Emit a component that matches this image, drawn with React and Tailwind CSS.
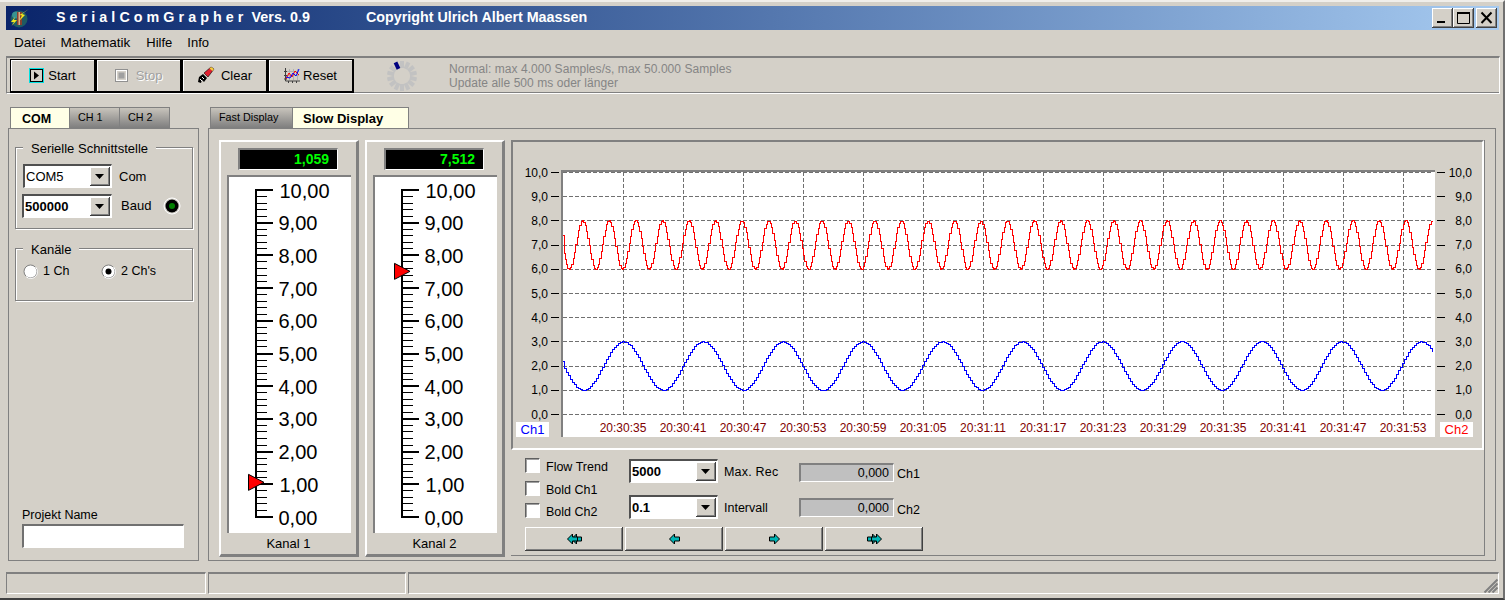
import React from 'react';

const FONT = "font-['Liberation_Sans',Arial,sans-serif]";
const raised = 'shadow-[inset_1px_1px_0_#fff,inset_-1px_-1px_0_#808080]';

function Logo() {
  return (
    <svg width="20" height="20" viewBox="0 0 20 20" className="shrink-0">
      <ellipse cx="9" cy="11" rx="8.5" ry="8.5" fill="#1f5a62" />
      <ellipse cx="6" cy="7" rx="4" ry="3.5" fill="#3a9490" />
      <rect x="7" y="4" width="5" height="13" fill="#8a3f2c" />
      <rect x="8.5" y="4" width="1.5" height="13" fill="#d9b08c" />
      <path d="M19 1 L12 6 L15 7 L9 13 L12 7.5 L9.5 7 Z" fill="#f4e81c" />
      <path d="M5 9 L1 14 L4 14 L1.5 18 L7 12 L4 12 Z" fill="#f4e81c" />
    </svg>
  );
}

function WinBtn({ children, className }) {
  return (
    <div className={`w-[21px] h-[20px] bg-[#d4d0c8] flex items-center justify-center border-r border-b border-[#404040] ${raised} ${className || ''}`}>
      <svg width="19" height="18" viewBox="0 0 19 18">{children}</svg>
    </div>
  );
}

function ToolBtn({ icon, label, disabled, gap }) {
  return (
    <div className={`w-[86px] h-[34px] flex items-center justify-center border-t border-l border-r-2 border-b-2 border-black bg-[#d4d0c8] shadow-[inset_1px_1px_0_#fff] ${gap}`}>
      {icon}
      <span className={`pt-[1px] ${disabled ? 'text-[#a0a0a0] [text-shadow:1px_1px_0_#fff]' : ''}`}>{label}</span>
    </div>
  );
}

function Spinner() {
  const segs = [];
  for (let i = 0; i < 14; i++) {
    segs.push(
      <line key={i} x1="16" y1="8" x2="16" y2="1" stroke={i === 13 ? '#000080' : '#c2c2c2'} strokeWidth="4" transform={`rotate(${(i * 360) / 14} 16 16)`} />
    );
  }
  return <svg width="32" height="32" viewBox="0 0 32 32" className="shrink-0">{segs}</svg>;
}

function Combo({ text, bold, w = 'w-[89px]' }) {
  return (
    <div className={`${w} h-[24px] shrink-0 bg-white flex items-center justify-between border-t-2 border-l-2 border-[#505050] border-r border-b border-r-white border-b-white pr-[1px]`}>
      <span className={`pl-[1px] text-[13px] ${bold ? 'font-bold' : ''}`}>{text}</span>
      <div className={`w-[20px] h-[19px] bg-[#d4d0c8] flex items-center justify-center border-r border-b border-[#404040] ${raised}`}>
        <svg width="9" height="5" viewBox="0 0 9 5"><path d="M0 0H9L4.5 5Z" fill="#000" /></svg>
      </div>
    </div>
  );
}

function Group({ title, className, children }) {
  return (
    <div className={`relative w-[178px] border border-[#808080] shadow-[1px_1px_0_#fff,inset_1px_1px_0_#fff] ${className}`}>
      <span className="absolute -top-[9px] left-[7px] bg-[#d4d0c8] px-[8px] text-[13px] whitespace-nowrap">{title}</span>
      {children}
    </div>
  );
}

function Radio({ on }) {
  return (
    <svg width="15" height="15" viewBox="0 0 15 15" className="shrink-0">
      <circle cx="7.5" cy="7.5" r="6.5" fill="#fff" stroke="#808080" />
      <path d="M3 12.5 A6.5 6.5 0 0 0 12.5 3" fill="none" stroke="#fff" />
      {on && <circle cx="7.5" cy="7.5" r="3" fill="#000" />}
    </svg>
  );
}

function Gauge({ display, value, name }) {
  const ticks = [];
  for (let i = 0; i <= 50; i++) {
    const y = 517 - i * 6.54;
    const major = i % 5 === 0;
    ticks.push(<line key={i} x1="256" x2={major ? 273 : 267} y1={y} y2={y} stroke="#000" strokeWidth={major ? 2 : 1} shapeRendering="crispEdges" />);
  }
  const labels = [];
  for (let v = 0; v <= 10; v++) {
    labels.push(
      <text key={v} x={v === 10 || v === 1 ? 279.5 : 278.5} y={517 - v * 32.7 + 7.5} fontSize="20" fill="#000" fontFamily="Liberation Sans, Arial, sans-serif">{`${v},00`}</text>
    );
  }
  const my = 517 - value * 32.7;
  return (
    <div className="w-[140px] h-[417px] shrink-0 border-t-2 border-l-2 border-white border-r-[3px] border-b-[3px] border-r-[#808080] border-b-[#808080] flex flex-col">
      <div className="ml-[17px] mt-[6px] w-[100px] h-[22px] bg-black border-t-2 border-l-2 border-[#808080] border-r border-b border-r-white border-b-white flex items-center justify-end pr-[8px] text-[14px] font-bold text-[#00ff00]">{display}</div>
      <div className="ml-[6px] mt-[5px] w-[124px] h-[358px] bg-white border-t-2 border-l-2 border-[#808080]">
        <svg width="122" height="356" viewBox="229 177 122 356" className="block">
          <line x1="256" x2="256" y1="189" y2="518" stroke="#000" strokeWidth="2" shapeRendering="crispEdges" />
          {ticks}
          {labels}
          <path d={`M248.5 ${my - 8} L264 ${my} L248.5 ${my + 8} Z`} fill="#ff0000" stroke="#000" strokeWidth="1" />
        </svg>
      </div>
      <div className="text-center text-[13px] leading-[22px]">{name}</div>
    </div>
  );
}

function stepPath(startX, startV, fn, step) {
  const Y = (v) => Math.round(414 - 24.2 * v) + 0.5;
  let d = `M${startX} ${Y(startV)}`;
  for (let x = startX + 0.5; x <= 1433; x += step) {
    const sx = Math.round(x) + 0.5;
    d += `H${sx}V${Y(fn(x))}`;
  }
  return d;
}

function Chart() {
  const Y = (v) => 414 - 24.2 * v;
  const font = 'Liberation Sans, Arial, sans-serif';
  const red = stepPath(563, 7.4, (x) => 7 + Math.cos((2 * Math.PI * (x - 582)) / 26.55), 1.33);
  const blue = stepPath(563, 2.2, (x) => 2 + Math.cos((2 * Math.PI * (x - 622)) / 79.8), 2);
  const times = ['20:30:35', '20:30:41', '20:30:47', '20:30:53', '20:30:59', '20:31:05', '20:31:11', '20:31:17', '20:31:23', '20:31:29', '20:31:35', '20:31:41', '20:31:47', '20:31:53'];
  const vals = [0, 1, 2, 3, 4, 5, 6, 7, 8, 9, 10];
  return (
    <svg width="969" height="306" viewBox="513 142 969 306" className="block">
      <rect x="563" y="171" width="872" height="266" fill="#fff" />
      <rect x="561" y="170" width="2" height="267" fill="#808080" />
      <rect x="561" y="170" width="874" height="2" fill="#808080" />
      {vals.map((v) => (
        <g key={v}>
          <line x1="563" x2="1433" y1={Math.round(Y(v)) + 0.5} y2={Math.round(Y(v)) + 0.5} stroke="#707070" strokeDasharray="4 2" shapeRendering="crispEdges" />
          <line x1="551" x2="559" y1={Math.round(Y(v)) + 0.5} y2={Math.round(Y(v)) + 0.5} stroke="#000" shapeRendering="crispEdges" />
          <line x1="1437" x2="1445" y1={Math.round(Y(v)) + 0.5} y2={Math.round(Y(v)) + 0.5} stroke="#000" shapeRendering="crispEdges" />
          <text x="548" y={Y(v) + 4.5} textAnchor="end" fontSize="12" fontFamily={font} fill="#000">{`${v},0`}</text>
          <text x="1472" y={Y(v) + 4.5} textAnchor="end" fontSize="12" fontFamily={font} fill="#000">{`${v},0`}</text>
        </g>
      ))}
      {times.map((t, i) => (
        <g key={t}>
          <line x1={623.5 + i * 60} x2={623.5 + i * 60} y1="172" y2="414" stroke="#707070" strokeDasharray="4 2" shapeRendering="crispEdges" />
          <text x={623 + i * 60} y="432" textAnchor="middle" fontSize="12" fontFamily={font} fill="#800000">{t}</text>
        </g>
      ))}
      <path d={red} fill="none" stroke="#ff0000" strokeWidth="1" shapeRendering="crispEdges" />
      <path d={blue} fill="none" stroke="#0000ff" strokeWidth="1" shapeRendering="crispEdges" />
      <rect x="516" y="422" width="33" height="15" fill="#fff" />
      <text x="532.5" y="434" textAnchor="middle" fontSize="13" fontFamily={font} fill="#0000ff">Ch1</text>
      <rect x="1440" y="422" width="33" height="15" fill="#fff" />
      <text x="1456.5" y="434" textAnchor="middle" fontSize="13" fontFamily={font} fill="#ff0000">Ch2</text>
    </svg>
  );
}

function Check({ label, className }) {
  return (
    <div className={`flex items-center gap-[6px] h-[15px] ${className || ''}`}>
      <div className="w-[15px] h-[15px] bg-white border-t border-l border-[#606060] border-r border-b border-r-white border-b-white shadow-[inset_1px_1px_0_#a0a0a0]" />
      <span className="text-[12.5px] pt-[4px]">{label}</span>
    </div>
  );
}

function Readout({ text, className }) {
  return (
    <div className={`w-[95px] h-[19px] shrink-0 bg-[#c0c0c0] border-t-2 border-l-2 border-[#808080] border-r border-b border-r-white border-b-white flex items-center justify-end pr-[4px] text-[12.5px] ${className}`}>{text}</div>
  );
}

function ArrowBtn({ children }) {
  return (
    <div className={`w-[98px] h-[24px] bg-[#d4d0c8] flex items-center justify-center border-r border-b border-[#404040] ${raised}`}>
      <svg width="16" height="12" viewBox="0 0 16 12">{children}</svg>
    </div>
  );
}

const L = (o) => `M${o + 0.5} 6 L${o + 5.5} 1 V4 H${o + 10.5} V8 H${o + 5.5} V11 Z`;
const R = (o) => `M${o + 10.5} 6 L${o + 5.5} 1 V4 H${o + 0.5} V8 H${o + 5.5} V11 Z`;
const ARROW = { fill: '#00b4b4', stroke: '#000', strokeWidth: 1 };

export default function App() {
  return (
    <div className={`${FONT} w-[1505px] h-[600px] bg-[#d4d0c8] text-black text-[13px] overflow-hidden flex flex-col border-t-2 border-t-[#f0eeea] border-r-2 border-r-[#707070] border-b-2 border-b-[#404040]`}>
      {/* title bar */}
      <div className="ml-[6px] mr-[4px] mt-[4px] h-[24px] shrink-0 bg-gradient-to-r from-[#0a246a] to-[#a6caf0] flex items-center text-white font-bold text-[14.3px]">
        <div className="ml-[4px]"><Logo /></div>
        <span className="ml-[26px] pb-[1px] whitespace-pre tracking-[0.05px]">S e r i a l C o m G r a p h e r  Vers. 0.9</span>
        <span className="ml-[56px] pb-[1px] whitespace-nowrap">Copyright Ulrich Albert Maassen</span>
        <div className="ml-auto mr-[2px] flex items-center">
          <WinBtn><rect x="4" y="12" width="8" height="2" fill="#000" /></WinBtn>
          <WinBtn><path d="M3.5 4.5H15.5V14.5H3.5Z" fill="none" stroke="#000" /><rect x="3" y="3" width="13" height="2" fill="#000" /></WinBtn>
          <WinBtn className="ml-[2px]"><path d="M4.5 3.5L14.5 14M14.5 3.5L4.5 14" stroke="#000" strokeWidth="2" fill="none" /></WinBtn>
        </div>
      </div>

      {/* menu */}
      <div className="h-[26px] shrink-0 flex items-center pl-[14px] text-[13.5px]">
        <span>Datei</span><span className="ml-[15px]">Mathematik</span><span className="ml-[16px] text-[13px]">Hilfe</span><span className="ml-[15px] text-[13px]">Info</span>
      </div>

      {/* toolbar */}
      <div className="ml-[6px] mr-[3px] h-[38px] shrink-0 border-t-2 border-l border-[#808080] border-r border-b border-r-white border-b-white flex items-center pl-[3px] shadow-[inset_0_-1px_0_#808080]">
        <ToolBtn gap="gap-[4px]" label="Start" icon={
          <svg width="15" height="15" viewBox="0 0 15 15"><rect x="0.5" y="0.5" width="14" height="14" fill="#e8e4dc" stroke="#00e0e0" /><rect x="1.5" y="1.5" width="12" height="12" fill="#d4d0c8" stroke="#000" /><path d="M5 3.5L10 7.5L5 11.5Z" fill="#000" /></svg>
        } />
        <ToolBtn disabled gap="gap-[8px]" label="Stop" icon={
          <svg width="13" height="13" viewBox="0 0 13 13"><rect x="0.5" y="0.5" width="12" height="12" fill="#d4d0c8" stroke="#909090" /><rect x="1.5" y="1.5" width="10" height="10" fill="none" stroke="#fff" /><rect x="3.5" y="3.5" width="6" height="6" fill="#a0a0a0" /></svg>
        } />
        <ToolBtn gap="gap-[6px]" label="Clear" icon={
          <svg width="18" height="18" viewBox="0 0 18 18"><path d="M1 16 L2 11 L6 8 L10 12 L7 16 L5 14 L4 17 Z" fill="#000" /><path d="M3 13 L5 15 M5 11 L7 13" stroke="#fff" /><path d="M7 7 L14 1 L17 3 L11 11 Z" fill="#e02030" stroke="#000" strokeWidth="0.6" /><path d="M14 1 L17 3 L15.5 5 L12.5 2.5 Z" fill="#f0d040" /></svg>
        } />
        <ToolBtn gap="gap-[3px]" label="Reset" icon={
          <svg width="16" height="16" viewBox="0 0 16 16"><path d="M3 4.5H15M3 8.5H15M5.5 2V13M9.5 2V13M13.5 2V13" stroke="#b0b0b0" fill="none" /><path d="M1.5 1V14H16M0 4.5H3M0 8.5H3M0 12H3M4.5 14V16M8.5 14V16M12.5 14V16" stroke="#404040" fill="none" /><path d="M2 12 L5 6 L8 10 L11 4 L15 8" stroke="#ff0000" fill="none" /><path d="M2 10 L6 11 L9 6 L12 9 L15 2" stroke="#0000ff" fill="none" /></svg>
        } />
        <div className="ml-[32px]"><Spinner /></div>
        <div className="ml-[31px] text-[12px] leading-[14px] text-[#858585] tracking-[0.05px] whitespace-nowrap pt-[1px]">
          <div>Normal: max 4.000 Samples/s, max 50.000 Samples</div>
          <div>Update alle 500 ms oder länger</div>
        </div>
      </div>

      {/* body */}
      <div className="flex pl-[8px] mt-[13px] h-[454px] shrink-0">
        {/* left column */}
        <div className="w-[191px] flex flex-col shrink-0">
          <div className="flex pl-[2px] h-[21px] text-[10.8px] shrink-0">
            <div className="w-[60px] bg-[#ffffe6] border-t border-x border-[#808080] flex items-center pl-[11px] font-bold text-[12.5px] pt-[2px]">COM</div>
            <div className="w-[50px] bg-gradient-to-b from-[#c8c4bc] to-[#7e7e7e] border-t border-r border-[#808080] pl-[8px] pt-[1px]">CH 1</div>
            <div className="w-[50px] bg-gradient-to-b from-[#c8c4bc] to-[#7e7e7e] border-t border-r border-[#808080] pl-[8px] pt-[1px]">CH 2</div>
          </div>
          <div className="flex-1 border border-[#808080] pl-[6px] pt-[18px] flex flex-col">
            <Group title="Serielle Schnittstelle" className="h-[82px] shrink-0">
              <div className="pl-[7px] pt-[16px] flex items-center gap-[7px]">
                <Combo text="COM5" />
                <span className="pt-[2px]">Com</span>
              </div>
              <div className="pl-[6px] pt-[6px] flex items-center">
                <Combo text="500000" bold w="w-[90px]" />
                <span className="ml-[9px]">Baud</span>
                <svg width="18" height="18" viewBox="0 0 18 18" className="ml-[12px]">
                  <circle cx="9" cy="9" r="8" fill="#d4d0c8" stroke="#fff" />
                  <circle cx="9" cy="9" r="6.5" fill="#000" />
                  <circle cx="9" cy="9" r="3" fill="#008000" />
                </svg>
              </div>
            </Group>
            <Group title="Kanäle" className="h-[53px] mt-[19px] shrink-0">
              <div className="flex items-center pl-[7px] pt-[12px] h-[32px]">
                <Radio />
                <span className="ml-[5px] w-[58px] text-[12.5px]">1 Ch</span>
                <Radio on />
                <span className="ml-[5px] text-[12.5px]">2 Ch's</span>
              </div>
            </Group>
            <div className="mt-auto pl-[7px] pb-[12px]">
              <div className="text-[12.5px] leading-[15px] mb-[1px]">Projekt Name</div>
              <div className="w-[162px] h-[24px] bg-white border-t-2 border-l-2 border-[#707070] border-r border-b border-r-white border-b-white" />
            </div>
          </div>
        </div>

        {/* right column */}
        <div className="w-[1288px] ml-[9px] flex flex-col shrink-0">
          <div className="flex pl-[2px] h-[21px] shrink-0">
            <div className="w-[83px] bg-gradient-to-b from-[#c8c4bc] to-[#7e7e7e] border-t border-x border-[#808080] pl-[8px] pt-[1px] text-[10.8px]">Fast Display</div>
            <div className="w-[116px] bg-[#ffffe6] border-t border-r border-[#808080] flex items-center pl-[10px] font-bold text-[13px] pt-[2px]">Slow Display</div>
          </div>
          <div className="flex-1 border border-[#808080] pl-[10px] pt-[11px] flex gap-[6px]">
            <Gauge display="1,059" value={1.059} name="Kanal 1" />
            <Gauge display="7,512" value={7.512} name="Kanal 2" />
            <div className="w-[974px] h-[416px] shrink-0 flex flex-col border-r border-b border-[#808080]">
              <div className="w-[973px] h-[310px] shrink-0 border-t-2 border-l-2 border-[#808080] border-r-2 border-r-white border-b-2 border-b-white">
                <Chart />
              </div>
              <div className="pl-[14px] pt-[9px] flex flex-col gap-[8px]">
                <div className="flex gap-[6px] h-[60px]">
                  <div className="w-[98px] -mt-[1px] flex flex-col gap-[7px]">
                    <Check label="Flow Trend" />
                    <Check label="Bold Ch1" className="mt-[1px]" />
                    <Check label="Bold Ch2" />
                  </div>
                  <div className="flex flex-col gap-[12px] text-[12.5px]">
                    <div className="flex h-[24px]">
                      <Combo text="5000" bold />
                      <span className="ml-[6px] w-[75px] pt-[4px] tracking-[0.2px]">Max. Rec</span>
                      <Readout text="0,000" className="mt-[4px]" />
                      <span className="ml-[3px] pt-[6px]">Ch1</span>
                    </div>
                    <div className="flex h-[24px]">
                      <Combo text="0.1" bold />
                      <span className="ml-[6px] w-[75px] pt-[4px]">Intervall</span>
                      <Readout text="0,000" className="mt-[3px]" />
                      <span className="ml-[3px] pt-[6px]">Ch2</span>
                    </div>
                  </div>
                </div>
                <div className="flex gap-[2px]">
                  <ArrowBtn><path d={L(5)} {...ARROW} /><path d={L(1)} {...ARROW} /></ArrowBtn>
                  <ArrowBtn><path d={L(3)} {...ARROW} /></ArrowBtn>
                  <ArrowBtn><path d={R(3)} {...ARROW} /></ArrowBtn>
                  <ArrowBtn><path d={R(1)} {...ARROW} /><path d={R(5)} {...ARROW} /></ArrowBtn>
                </div>
              </div>
            </div>
          </div>
        </div>
      </div>

      {/* status bar */}
      <div className="flex mt-[11px] ml-[6px] mr-[4px] h-[22px] gap-[2px] shrink-0">
        {['w-[200px]', 'w-[198px]', 'flex-1 relative'].map((w, i) => (
          <div key={i} className={`${w} border-t-2 border-l border-[#808080] border-r border-b border-r-white border-b-white`}>
            {i === 2 && (
              <svg width="15" height="15" viewBox="0 0 15 15" className="absolute right-0 bottom-0">
                <path d="M14.5 1.5L1.5 14.5M14.5 5.5L5.5 14.5M14.5 9.5L9.5 14.5" stroke="#808080" strokeWidth="2" fill="none" />
              </svg>
            )}
          </div>
        ))}
      </div>
    </div>
  );
}
